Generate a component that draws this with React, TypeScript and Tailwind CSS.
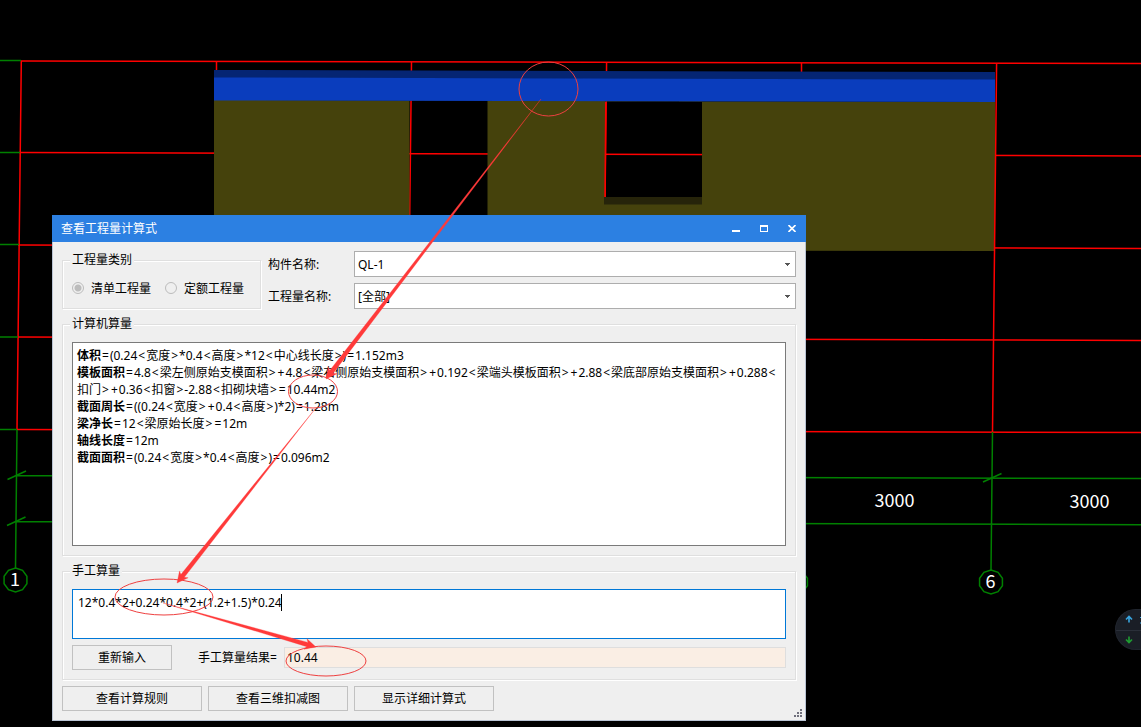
import { useState } from 'react';

interface Formula {
  name: string;
  lines: string[];
}

interface ArrowProps {
  from: [number, number];
  to: [number, number];
}

const formulas: Formula[] = [
  { name: '体积', lines: ['=(0.24<宽度>*0.4<高度>*12<中心线长度>)=1.152m3'] },
  {
    name: '模板面积',
    lines: [
      '=4.8<梁左侧原始支模面积>+4.8<梁右侧原始支模面积>+0.192<梁端头模板面积>+2.88<梁底部原始支模面积>+0.288<',
      '扣门>+0.36<扣窗>-2.88<扣砌块墙>=10.44m2',
    ],
  },
  { name: '截面周长', lines: ['=((0.24<宽度>+0.4<高度>)*2)=1.28m'] },
  { name: '梁净长', lines: ['=12<梁原始长度>=12m'] },
  { name: '轴线长度', lines: ['=12m'] },
  { name: '截面面积', lines: ['=(0.24<宽度>*0.4<高度>)=0.096m2'] },
];

const fieldsetClass =
  'min-w-0 border border-[#dfdfdf] px-[9px] pt-[9px] pb-[9px] shadow-[1px_1px_0_#fff,inset_1px_1px_0_#fff]';
const legendClass = '-mx-0.5 bg-[#efefef] px-0.5 leading-[18px]';
const buttonClass =
  'h-[25px] border border-[#c1c1c1] bg-[#efefef] leading-[17px] hover:border-[#0078d7] hover:bg-[#e5f1fb]';

// ten-sided bubble at the end of an axis
function bubble(cx: number, cy: number) {
  return Array.from({ length: 10 }, (_, i) => {
    const a = (Math.PI / 5) * i - Math.PI / 2;
    return `${cx + 12 * Math.cos(a)},${cy + 12 * Math.sin(a)}`;
  }).join(' ');
}

function Model() {
  return (
    <svg className="absolute inset-0 h-full w-full" aria-hidden="true">
      <g stroke="#ff0000" strokeWidth="1.5">
        <path d="M21 61 1141 63.5M19 152.5 1141 156M18 245 1141 248.4M17.5 337 1141 340.4M17 429.5 1141 432.5" />
        <path d="M21.3 61 17 430M216.5 61.5V215M411.5 62 409.7 215M606.6 62 605 204M801.5 63V80" />
      </g>
      <g stroke="#008000" strokeWidth="1.5">
        <path d="M0 60.5H21M0 152.5H20M0 244.5H19M0 337H18M0 429.5H17" />
        <path d="M17 430 15.5 568M17 475.5 1141 478.5M16 521.5 1141 524.7M992.5 432 991 570" />
        <path d="M7.5 479.5 26 471M7 525.5 25.5 517M983 482 1001.5 473.5" />
        <polygon points={bubble(15.5, 580)} fill="none" />
        <polygon points={bubble(796, 582)} fill="none" />
        <polygon points={bubble(991, 582)} fill="none" />
      </g>
      <path
        fill="#45420c"
        fillRule="evenodd"
        d="M214 100 995 102V251L214 250ZM409.5 100V215H487.5V101ZM605 101V197H702V101Z"
      />
      <path fill="#26240a" d="M604 197H702V204.5H604Z" />
      <path fill="#052573" d="M214 70 995 72V80L214 78Z" />
      <path fill="#0a3dbd" d="M214 77.5 995 79.5V102L214 100.5Z" />
      <g stroke="#ff0000" strokeWidth="1.5">
        <path d="M996.6 63.5 992.5 432M605.8 102 605 197" />
      </g>
      <g fill="#fff" fontSize="18" textAnchor="middle" fontFamily="'Noto Sans CJK SC', sans-serif">
        <text x="894.5" y="507">3000</text>
        <text x="1089.5" y="508">3000</text>
        <text x="15" y="586">1</text>
        <text x="990.5" y="588">6</text>
      </g>
    </svg>
  );
}

function Arrow({ from, to }: ArrowProps) {
  const [x1, y1] = from;
  const [x2, y2] = to;
  const len = Math.hypot(x2 - x1, y2 - y1);
  const ux = (x2 - x1) / len;
  const uy = (y2 - y1) / len;
  const at = (back: number, side: number) =>
    `${x2 - ux * back - uy * side},${y2 - uy * back + ux * side}`;
  const points = [`${x1},${y1}`, at(9, 2.2), at(11, 5.5), `${x2},${y2}`, at(11, -5.5), at(9, -2.2)];
  return <polygon points={points.join(' ')} fill="#ff3a3a" stroke="#ff3a3a" strokeWidth="0.3" />;
}

function Annotations() {
  return (
    <svg className="pointer-events-none absolute inset-0 h-full w-full" aria-hidden="true">
      <g fill="none" stroke="#ee4040">
        <ellipse cx="548.5" cy="89" rx="29.5" ry="27" />
        <ellipse cx="313" cy="391.5" rx="24.5" ry="16.5" />
        <ellipse cx="164" cy="597" rx="49" ry="18" />
        <ellipse cx="326" cy="661" rx="40" ry="15" />
      </g>
      <Arrow from={[541, 99]} to={[326, 379]} />
      <Arrow from={[315, 409]} to={[177, 583]} />
      <Arrow from={[163, 603]} to={[316, 647]} />
    </svg>
  );
}

function SpeedWidget() {
  return (
    <div className="absolute top-[609px] right-0 h-[41px] w-[26px] overflow-hidden rounded-l-full border border-r-0 border-[#20252e] bg-[#1a1e26]">
      <svg width="26" height="39" viewBox="0 0 26 39" fill="none" strokeWidth="1.6" aria-hidden="true">
        <path d="M0 20.5H26" stroke="#2a2f39" strokeWidth="1" />
        <path d="M13 12.5V7M10 9.5 13 6.5 16 9.5" stroke="#38a5e0" />
        <path d="M13 26.5V32M10 29.5 13 32.5 16 29.5" stroke="#1f9e32" />
        <path d="M24 7.5H26M24 13H26" stroke="#38a5e0" strokeWidth="1" />
      </svg>
    </div>
  );
}

function Combo({ id, label, value }: { id: string; label: string; value: string }) {
  return (
    <div className="flex items-center">
      <label htmlFor={id} className="w-[86px] shrink-0">
        {label}
      </label>
      <div className="relative flex-1">
        <select
          id={id}
          defaultValue={value}
          className="block h-[26px] w-full appearance-none rounded-none border border-[#adadad] bg-white pr-5 pl-[3px] outline-none"
        >
          <option>{value}</option>
        </select>
        <svg
          className="pointer-events-none absolute top-3 right-[6px]"
          width="5"
          height="3"
          viewBox="0 0 5 3"
          shapeRendering="crispEdges"
        >
          <path d="M0 0H5V1H4V2H3V3H2V2H1V1H0Z" fill="#555" />
        </svg>
      </div>
    </div>
  );
}

// operators and brackets get a little air on both sides
function FormulaLine({ text }: { text: string }) {
  return text.split(/([<>+=])/).map((part, i) =>
    i % 2 ? (
      <span key={i} className="px-px">
        {part}
      </span>
    ) : (
      part
    )
  );
}

function TitleBar() {
  return (
    <header className="flex h-[27px] items-center bg-[#2c80e2] pl-[9px] text-white">
      <h1 className="flex-1">查看工程量计算式</h1>
      <div className="flex" role="group">
        <button type="button" aria-label="最小化" className="flex h-[27px] w-7 items-center justify-center">
          <svg width="8" height="7" shapeRendering="crispEdges">
            <path d="M0 5H8V7H0Z" fill="#fff" />
          </svg>
        </button>
        <button type="button" aria-label="最大化" className="flex h-[27px] w-7 items-center justify-center">
          <svg width="8" height="7" shapeRendering="crispEdges">
            <path fillRule="evenodd" d="M0 0H8V7H0ZM1 2V6H7V2Z" fill="#fff" />
          </svg>
        </button>
        <button type="button" aria-label="关闭" className="flex h-[27px] w-7 items-center justify-center">
          <svg width="8" height="7">
            <path d="M0.5 0 7.5 7M7.5 0 0.5 7" stroke="#fff" strokeWidth="1.6" />
          </svg>
        </button>
      </div>
    </header>
  );
}

export default function App() {
  const [expression, setExpression] = useState('12*0.4*2+0.24*0.4*2+(1.2+1.5)*0.24');

  return (
    <div className="relative min-h-screen overflow-hidden bg-black pt-[215px] pb-1.5 pl-[52px] font-['Noto_Sans','Noto_Sans_CJK_SC',sans-serif] text-[12px] leading-[17px] text-black">
      <Model />
      <SpeedWidget />

      <main className="relative max-w-[754px]">
        <TitleBar />
        <div className="flex flex-col gap-[6px] border border-t-0 border-[#b9c3d3] bg-[#efefef] p-[9px]">
          <div className="flex gap-[7px]">
            <fieldset className={`${fieldsetClass} w-[199px] shrink-0`}>
              <legend className={legendClass}>工程量类别</legend>
              <div className="flex h-5 items-center gap-[14px]">
                {['清单工程量', '定额工程量'].map((kind, i) => (
                  <label key={kind} className="flex items-center gap-[7px] whitespace-nowrap">
                    <input
                      type="radio"
                      name="kind"
                      disabled
                      defaultChecked={i === 0}
                      className="size-3 appearance-none rounded-full border border-[#bcbcbc] checked:bg-[radial-gradient(circle,#bcbcbc_3px,transparent_4px)]"
                    />
                    {kind}
                  </label>
                ))}
              </div>
            </fieldset>
            <div className="flex flex-1 flex-col gap-[6px]">
              <Combo id="component" label="构件名称:" value="QL-1" />
              <Combo id="quantity" label="工程量名称:" value="[全部]" />
            </div>
          </div>

          <fieldset className={fieldsetClass}>
            <legend className={legendClass}>计算机算量</legend>
            <div className="h-[204px] overflow-auto border border-[#7a7a7a] bg-white px-1 py-1">
              {formulas.map(f =>
                f.lines.map((line, i) => (
                  <p key={line} className="whitespace-nowrap">
                    {i === 0 && <b>{f.name}</b>}
                    <FormulaLine text={line} />
                  </p>
                ))
              )}
            </div>
          </fieldset>

          <fieldset className={fieldsetClass}>
            <legend className={legendClass}>手工算量</legend>
            <textarea
              aria-label="手工算量"
              value={expression}
              onChange={e => setExpression(e.target.value)}
              className="block h-[50px] w-full resize-none border border-[#0078d7] bg-white px-[5px] py-1 outline-none"
            />
            <div className="mt-[6px] flex items-center">
              <button type="button" onClick={() => setExpression('')} className={`${buttonClass} w-[100px]`}>
                重新输入
              </button>
              <label htmlFor="result" className="ml-[26px] w-[86px]">
                手工算量结果=
              </label>
              <input
                id="result"
                readOnly
                value={expression ? '10.44' : ''}
                className="h-[21px] min-w-0 flex-1 border border-[#dedede] bg-[#faeee4] px-0.5 outline-none"
              />
            </div>
          </fieldset>

          <div className="flex gap-[6px]">
            <button type="button" className={`${buttonClass} w-[140px]`}>查看计算规则</button>
            <button type="button" className={`${buttonClass} w-[140px]`}>查看三维扣减图</button>
            <button type="button" className={`${buttonClass} w-[140px]`}>显示详细计算式</button>
          </div>
        </div>
        <svg
          className="absolute right-1 bottom-1 cursor-nwse-resize"
          width="8"
          height="8"
          shapeRendering="crispEdges"
        >
          <path d="M6 0h2v2h-2zM3 3h2v2h-2zM6 3h2v2h-2zM0 6h2v2h-2zM3 6h2v2h-2zM6 6h2v2h-2z" fill="#70707c" />
        </svg>
      </main>

      {/* text cursor */}
      <svg className="pointer-events-none absolute inset-0 h-full w-full" aria-hidden="true">
        <path d="M281.5 594V611" stroke="#000" />
      </svg>
      <Annotations />
    </div>
  );
}
